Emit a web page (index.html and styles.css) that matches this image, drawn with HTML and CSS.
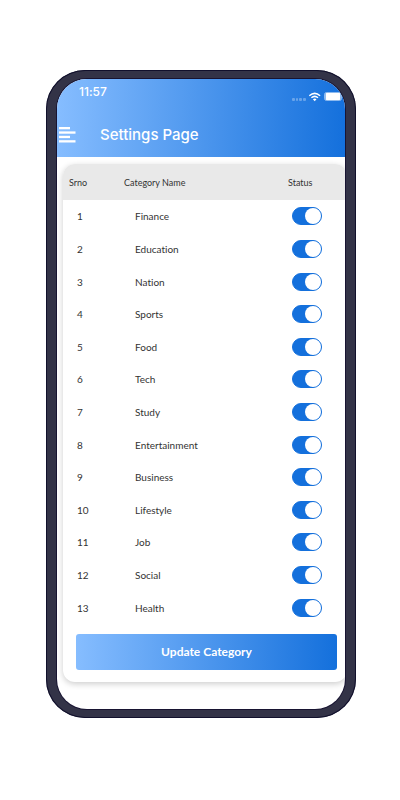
FILE: index.html
```html
<!DOCTYPE html>
<html lang="en">
<head>
<meta charset="utf-8">
<meta name="viewport" content="width=device-width, initial-scale=1">
<title>Settings Page</title>
<link rel="stylesheet" href="styles.css">
</head>
<body>
<div class="phone">
  <div class="screen">
    <header class="header">
      <div class="statusbar">
        <span class="time">11:57</span>
        <svg class="indicators" width="50" height="10" viewBox="0 0 50 10" aria-hidden="true">
          <g fill="#fff" opacity=".3">
            <rect x="0" y="6" width="3" height="3" rx="1"/><rect x="4" y="6" width="2" height="3" rx="1"/><rect x="7" y="6" width="3" height="3" rx="1"/><rect x="11" y="6" width="3" height="3" rx="1"/>
          </g>
          <g fill="none" stroke="#fff" stroke-width="1.5">
            <path d="M17.3 3.7Q22.7-1 28.1 3.7"/>
            <path d="M19.4 5.8Q22.7 3 26 5.8"/>
          </g>
          <path d="M20.9 7.3Q22.7 5.8 24.5 7.3L22.7 9.2Z" fill="#fff"/>
          <rect x="32.5" y=".5" width="17" height="8" rx="2" fill="none" stroke="#fff" stroke-opacity=".5"/>
          <rect x="33.5" y="1" width="15" height="7" rx="1" fill="#fff"/>
        </svg>
      </div>
      <div class="titlebar">
        <button class="menu" type="button" aria-label="Menu">
          <svg width="17" height="16" viewBox="0 0 17 16" fill="#fff" aria-hidden="true">
            <rect y="0" width="11" height="2.3"/><rect y="4.4" width="16.5" height="2.3"/><rect y="8.8" width="11" height="2.3"/><rect y="13.2" width="16.5" height="2.3"/>
          </svg>
        </button>
        <h1>Settings Page</h1>
      </div>
    </header>
    <form class="card">
      <table>
        <thead><tr><th class="srno">Srno</th><th class="name">Category Name</th><th class="status">Status</th></tr></thead>
        <tbody>
          <tr><td>1</td><td><label for="c1">Finance</label></td><td><input id="c1" type="checkbox" role="switch" checked></td></tr>
          <tr><td>2</td><td><label for="c2">Education</label></td><td><input id="c2" type="checkbox" role="switch" checked></td></tr>
          <tr><td>3</td><td><label for="c3">Nation</label></td><td><input id="c3" type="checkbox" role="switch" checked></td></tr>
          <tr><td>4</td><td><label for="c4">Sports</label></td><td><input id="c4" type="checkbox" role="switch" checked></td></tr>
          <tr><td>5</td><td><label for="c5">Food</label></td><td><input id="c5" type="checkbox" role="switch" checked></td></tr>
          <tr><td>6</td><td><label for="c6">Tech</label></td><td><input id="c6" type="checkbox" role="switch" checked></td></tr>
          <tr><td>7</td><td><label for="c7">Study</label></td><td><input id="c7" type="checkbox" role="switch" checked></td></tr>
          <tr><td>8</td><td><label for="c8">Entertainment</label></td><td><input id="c8" type="checkbox" role="switch" checked></td></tr>
          <tr><td>9</td><td><label for="c9">Business</label></td><td><input id="c9" type="checkbox" role="switch" checked></td></tr>
          <tr><td>10</td><td><label for="c10">Lifestyle</label></td><td><input id="c10" type="checkbox" role="switch" checked></td></tr>
          <tr><td>11</td><td><label for="c11">Job</label></td><td><input id="c11" type="checkbox" role="switch" checked></td></tr>
          <tr><td>12</td><td><label for="c12">Social</label></td><td><input id="c12" type="checkbox" role="switch" checked></td></tr>
          <tr><td>13</td><td><label for="c13">Health</label></td><td><input id="c13" type="checkbox" role="switch" checked></td></tr>
        </tbody>
      </table>
      <button class="update" type="button">Update Category</button>
    </form>
  </div>
</div>
</body>
</html>
```
FILE: styles.css
```css
* {
  box-sizing: border-box;
}

body {
  margin: 0;
  padding: 70px 44px 0 46px;
  background: #fff;
  color: #333;
  font-family: Lato, "Liberation Sans", sans-serif;
  font-size: 10px;
  font-variant-ligatures: none;
}

.phone {
  padding: 9px 11px;
  border-radius: 39px;
  background: #333347;
  box-shadow: inset 0 0 0 1px #11102c;
}

.screen {
  overflow: hidden;
  padding-bottom: 27px;
  border-radius: 30px;
  background: #fff;
  box-shadow: 0 0 0 1px #181432;
}

.header {
  height: 78px;
  background: linear-gradient(91deg, #86bdff, #1470dc);
  color: #fff;
  font-family: Inter, "Liberation Sans", sans-serif;
}

.statusbar {
  display: flex;
  justify-content: space-between;
  height: 44px;
  padding: 5px 3px 0 22px;
}

.time {
  font-size: 12px;
  font-weight: 500;
  line-height: 16px;
}

.indicators {
  margin-top: 8px;
}

.titlebar {
  display: flex;
  align-items: center;
  gap: 24px;
  padding-left: 2px;
}

.menu {
  display: flex;
  padding: 0;
  border: 0;
  background: none;
}

h1 {
  margin: 0;
  font-size: 15px;
  font-weight: 500;
  line-height: 24px;
}

.card {
  margin: 7px -2px 0 6px;
  padding-bottom: 12px;
  overflow: hidden;
  border-radius: 12px;
  background: #fff;
  box-shadow: 0 2px 6px rgba(0, 0, 0, .2);
}

table {
  width: 100%;
  height: 460px;
  border-collapse: collapse;
  table-layout: fixed;
}

th {
  height: 36px;
  padding: 0 0 0 6px;
  background: #e9e9e9;
  font-size: 9px;
  font-weight: 400;
  text-align: left;
}

.srno {
  width: 55px;
}

.status {
  width: 65px;
}

td {
  padding: 0 0 0 14px;
}

td + td {
  padding-left: 17px;
}

td:last-child {
  padding-left: 10px;
}

input {
  display: block;
  appearance: none;
  width: 30px;
  height: 18px;
  margin: 0;
  border: 1px solid #1470dc;
  border-radius: 9px;
  background: #1470dc;
}

input::before {
  content: "";
  display: block;
  width: 16px;
  height: 16px;
  border-radius: 50%;
  background: #fff;
}

input:checked::before {
  margin-left: auto;
}

.update {
  display: block;
  width: calc(100% - 23px);
  height: 36px;
  margin: 10px 10px 0 13px;
  padding: 0 0 2px;
  border: 0;
  border-radius: 3px;
  background: linear-gradient(91deg, #86bdff, #1470dc);
  color: #fff;
  font-family: Lato, "Liberation Sans", sans-serif;
  font-size: 12px;
  font-weight: 700;
}
```
